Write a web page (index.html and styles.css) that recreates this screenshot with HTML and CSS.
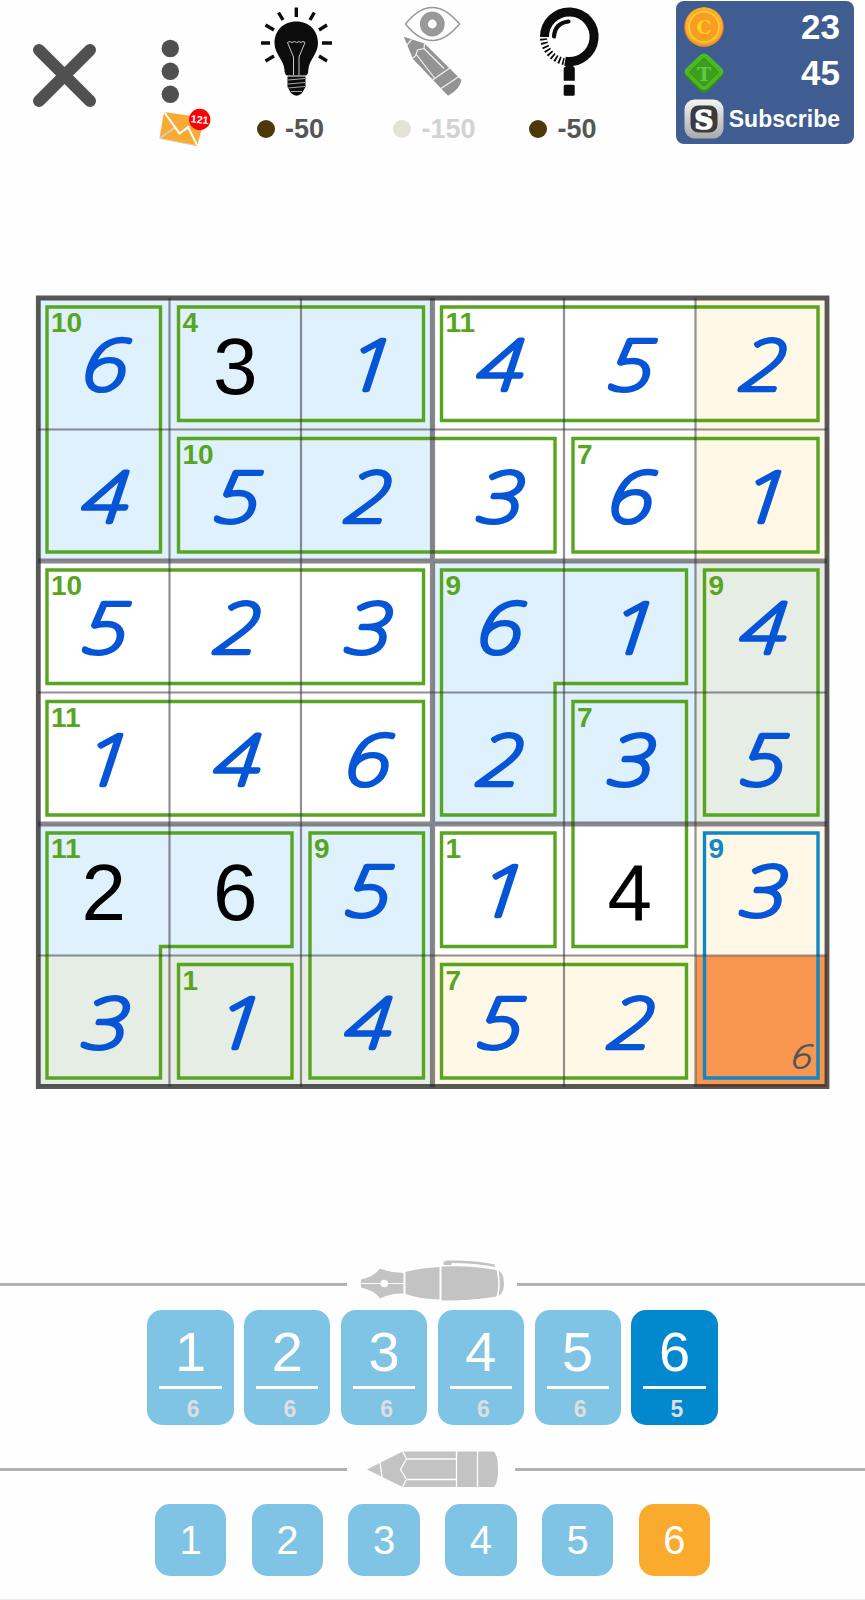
FILE: index.html
```html
<!DOCTYPE html>
<html lang="en">
<head>
  <meta charset="utf-8">
  <title>Killer Sudoku 6x6</title>
  <link rel="stylesheet" href="styles.css">
</head>

<body>

  <div id="toolbar">
    <svg class="tool" viewBox="0 0 130 150" width="130" height="150">
      <path d="M39 50L90 101M90 50L39 101" stroke="#505050" stroke-width="12" stroke-linecap="round"/>
    </svg>

    <svg class="tool" viewBox="130 0 80 150" width="80" height="150" overflow="visible">
      <g fill="#505050">
        <circle cx="170.3" cy="48.5" r="8.7"/>
        <circle cx="170.3" cy="71.3" r="8.7"/>
        <circle cx="170.3" cy="94.3" r="8.7"/>
      </g>
      <path d="M164 112L205 118L197 146L159.500 138.500Z" fill="#f8ab33"/>
      <path d="M160 138L176 127M182 132L190 127" stroke="#d9cfc0" stroke-width="1.600"/>
      <path d="M160 138.500L196 145.500" stroke="#d9cfc0" stroke-width="1"/>
      <path d="M164.500 112.500L179.500 133.500L188 127L197 145" fill="none" stroke="#fff" stroke-width="2"/>
      <circle cx="199.7" cy="119.500" r="10.700" fill="#fb0007"/>
      <text class="badge-num" x="199.700" y="123.300" transform="rotate(6 199.700 119.500)">121</text>
    </svg>

    <div class="tool hint">
      <svg viewBox="210 0 173 110" width="173" height="110">
        <path d="M296.300 7.500V17M278.500 12.500L283 20M314.300 12.500L310 20M265.500 25L274 30M327 25L319 30M261 43H270M322 43H332M265.500 61L274 56M327 61L319 56" stroke="#0c0c0c" stroke-width="3.400"/>
        <path d="M296.300 21.500C283 21.500 274.500 31 274.500 43C274.500 54 284 60 284.500 70C284.500 73.500 285.500 75.500 288 75.500H305C307.500 75.500 308.300 73.500 308.300 70C308.800 60 318 54 318 43C318 31 309.500 21.500 296.300 21.500Z" fill="#0c0c0c"/>
        <path d="M287.500 42.500Q290 40.500 292 42.500Q294.500 40.500 296.500 42.500Q299 40.500 301 42.500Q303 40.500 305 42.500L299 57V75M287.500 42.500L293.500 57V75" fill="none" stroke="#c8c8c8" stroke-width="1"/>
        <path d="M287.500 76.500H305.500V87L302 93Q296.500 98.500 291 93L287.500 87Z" fill="#0c0c0c"/>
        <path d="M288 80L305 78.500M288 84L305 82.500M288 88L305 86.500M291 91.500H302" stroke="#a8a8a8" stroke-width="1"/>
      </svg>
      <div class="price"><i></i>-50</div>
    </div>

    <div class="tool reveal">
      <svg viewBox="383 0 100 110" width="100" height="110">
        <path d="M405.500 24Q432 -9 459.500 24Q432 57 405.500 24Z" fill="none" stroke="#999" stroke-width="1.500"/>
        <circle cx="432.300" cy="24" r="8.400" fill="none" stroke="#999" stroke-width="8"/>
        <path d="M403.800 36.800L424.500 43.500L461.300 80Q460.500 89 448 95.800L413 59Z" fill="#939393"/>
        <path d="M411.500 39.500L406.500 45.500M424.500 43.500L424 48.500L417.500 50L415.500 56L412 58.500M424 48.500L444 68.500M416 54L434.500 78M450.500 67.500L432.500 80M459 76.500L441 88.500" fill="none" stroke="#f2f2f2" stroke-width="1.200"/>
      </svg>
      <div class="price"><i></i>-150</div>
    </div>

    <div class="tool hint">
      <svg viewBox="483 0 172 110" width="172" height="110">
        <path d="M544.500 37A24.800 24.800 0 1 1 565 61.200" fill="none" stroke="#0c0c0c" stroke-width="9"/>
        <path d="M543.500 38.500A26 26 0 0 0 564 61.500" fill="none" stroke="#0c0c0c" stroke-width="7" stroke-dasharray="1.800 2.100"/>
        <path d="M554 36.500Q555 23 568.500 21.500" fill="none" stroke="#0c0c0c" stroke-width="4.200" stroke-linecap="round"/>
        <path d="M566 62H573V66L574.800 68V80.800H563.700V68L566 66Z" fill="#0c0c0c"/>
        <rect x="563.700" y="84.800" width="11" height="11" rx="1.500" fill="#0c0c0c"/>
      </svg>
      <div class="price"><i></i>-50</div>
    </div>

    <div id="wallet">
      <div class="wallet-row">
        <svg viewBox="0 0 40 40" width="40" height="40">
          <circle cx="20" cy="20" r="19.700" fill="#f98e1e"/>
          <circle cx="20" cy="19" r="18.500" fill="#fdb02b"/>
          <circle cx="20" cy="20" r="15" fill="#fa9b23" stroke="#fdd235" stroke-width="1.400"/>
          <text class="coin-letter" x="20" y="26.500" fill="#fdd51f">C</text>
        </svg>
        <b>23</b>
      </div>
      <div class="wallet-row">
        <svg viewBox="0 0 40 40" width="40" height="40">
          <path d="M16 2.500Q20 -1 24 2.500L38 16.500Q41 21 37 25L24 38Q20 41 16 38L3 25Q-1 21 2 16.500Z" fill="#2f8f1c"/>
          <path d="M16 2Q20 -1 24 2L38 15.500Q41 19 37 22.500L24 35.500Q20 38 16 35.500L3 22.500Q-1 19 2 15.500Z" fill="#4fb81f"/>
          <path d="M20 5L34.500 19L20 33.500L5.500 19Z" fill="#3da01a" stroke="#35901b" stroke-width="1"/>
          <text class="coin-letter" x="20" y="27.500" fill="#5fca4a">T</text>
        </svg>
        <b>45</b>
      </div>
      <div class="wallet-row">
        <svg viewBox="0 0 40 40" width="40" height="40">
          <defs>
            <linearGradient id="silver" x1="0" y1="0" x2="0" y2="1">
              <stop offset="0" stop-color="#f4f4f4"/>
              <stop offset="1" stop-color="#a9a9ab"/>
            </linearGradient>
          </defs>
          <rect x="0.500" y="0.500" width="39" height="39" rx="10" fill="url(#silver)"/>
          <rect x="6.500" y="6.500" width="27" height="27" rx="8" fill="#3c3c3e"/>
          <text class="s-letter" x="20" y="29.500">S</text>
        </svg>
        <span>Subscribe</span>
      </div>
    </div>
  </div>

  <div id="board">
    <div class="cell blue"><em>10</em><svg class="pen"><text x="68" y="92">6</text></svg></div>
    <div class="cell blue"><em>4</em><span class="given">3</span></div>
    <div class="cell blue"><svg class="pen"><text x="70" y="92">1</text></svg></div>
    <div class="cell"><em>11</em><svg class="pen"><text x="68" y="92">4</text></svg></div>
    <div class="cell"><svg class="pen"><text x="68" y="92">5</text></svg></div>
    <div class="cell cream"><svg class="pen"><text x="68" y="92">2</text></svg></div>

    <div class="cell blue"><svg class="pen"><text x="68" y="92">4</text></svg></div>
    <div class="cell blue"><em>10</em><svg class="pen"><text x="68" y="92">5</text></svg></div>
    <div class="cell blue"><svg class="pen"><text x="68" y="92">2</text></svg></div>
    <div class="cell"><svg class="pen"><text x="68" y="92">3</text></svg></div>
    <div class="cell"><em>7</em><svg class="pen"><text x="68" y="92">6</text></svg></div>
    <div class="cell cream"><svg class="pen"><text x="70" y="92">1</text></svg></div>

    <div class="cell"><em>10</em><svg class="pen"><text x="68" y="92">5</text></svg></div>
    <div class="cell"><svg class="pen"><text x="68" y="92">2</text></svg></div>
    <div class="cell"><svg class="pen"><text x="68" y="92">3</text></svg></div>
    <div class="cell blue"><em>9</em><svg class="pen"><text x="68" y="92">6</text></svg></div>
    <div class="cell blue"><svg class="pen"><text x="70" y="92">1</text></svg></div>
    <div class="cell sage"><em>9</em><svg class="pen"><text x="68" y="92">4</text></svg></div>

    <div class="cell"><em>11</em><svg class="pen"><text x="70" y="92">1</text></svg></div>
    <div class="cell"><svg class="pen"><text x="68" y="92">4</text></svg></div>
    <div class="cell"><svg class="pen"><text x="68" y="92">6</text></svg></div>
    <div class="cell blue"><svg class="pen"><text x="68" y="92">2</text></svg></div>
    <div class="cell blue"><em>7</em><svg class="pen"><text x="68" y="92">3</text></svg></div>
    <div class="cell sage"><svg class="pen"><text x="68" y="92">5</text></svg></div>

    <div class="cell blue"><em>11</em><span class="given">2</span></div>
    <div class="cell blue"><span class="given">6</span></div>
    <div class="cell blue"><em>9</em><svg class="pen"><text x="68" y="92">5</text></svg></div>
    <div class="cell"><em>1</em><svg class="pen"><text x="70" y="92">1</text></svg></div>
    <div class="cell"><span class="given">4</span></div>
    <div class="cell cream active-cage"><em>9</em><svg class="pen"><text x="68" y="92">3</text></svg></div>

    <div class="cell sage"><svg class="pen"><text x="68" y="92">3</text></svg></div>
    <div class="cell sage"><em>1</em><svg class="pen"><text x="70" y="92">1</text></svg></div>
    <div class="cell sage"><svg class="pen"><text x="68" y="92">4</text></svg></div>
    <div class="cell cream"><em>7</em><svg class="pen"><text x="68" y="92">5</text></svg></div>
    <div class="cell cream"><svg class="pen"><text x="68" y="92">2</text></svg></div>
    <div class="cell selected"><svg class="pen note"><text x="106" y="112">6</text></svg></div>

    <!-- cages and grid lines, 131.5 per cell -->
    <svg id="lines" viewBox="0 0 789 789" width="789" height="789">
      <g class="cages">
        <path d="M9 9H122.500V254H9Z"/>
        <path d="M140.500 9H385.500V122.500H140.500Z"/>
        <path d="M403.500 9H780V122.500H403.500Z"/>
        <path d="M140.500 140.500H517V254H140.500Z"/>
        <path d="M535 140.500H780V254H535Z"/>
        <path d="M9 272H385.500V385.500H9Z"/>
        <path d="M403.500 272H648.500V385.500H517V517H403.500Z"/>
        <path d="M666.500 272H780V517H666.500Z"/>
        <path d="M9 403.500H385.500V517H9Z"/>
        <path d="M535 403.500H648.500V648.500H535Z"/>
        <path d="M9 535H254V648.500H122.500V780H9Z"/>
        <path d="M272 535H385.500V780H272Z"/>
        <path d="M403.500 535H517V648.500H403.500Z"/>
        <path d="M140.500 666.500H254V780H140.500Z"/>
        <path d="M403.500 666.500H648.500V780H403.500Z"/>
        <path class="current" d="M666.500 535H780V780H666.500Z"/>
      </g>
      <path class="thin" d="M131.500 0V789M263 0V789M526 0V789M657.500 0V789"/>
      <path class="thin" d="M0 131.500H789M0 394.500H789M0 657.500H789"/>
      <path class="thick" d="M394.500 0V789M0 263H789M0 526H789"/>
      <path class="frame" d="M0.300 0H789V788.500H0.300Z"/>
    </svg>
  </div>

  <div class="divider pen-divider">
    <svg viewBox="347 1260 170 49" width="170" height="49">
      <g fill="#c3c3c3">
        <path d="M361 1279.500Q374 1277 380 1268.500Q391 1273 403.500 1273V1293.500Q391 1293 380 1298.500Q374 1290 361 1287.500Z"/>
        <path d="M405.500 1272Q420 1268 439.500 1267V1299.500Q420 1299 405.500 1294Z"/>
        <path d="M441.500 1266.500Q470 1265 496.500 1270Q500 1284 496.500 1296.500Q470 1301 441.500 1300.500Z"/>
        <path d="M498.500 1270.500Q504 1274 504 1283.500Q504 1293 498.500 1296Q501 1284 498.500 1270.500Z"/>
        <path d="M443.500 1263Q443 1260.500 448 1260.500Q475 1260 495 1264.500V1267Q475 1263 452 1263L451 1265H443.500Z"/>
      </g>
      <path d="M361 1283.500H404" stroke="#fff" stroke-width="1"/>
      <circle cx="384.300" cy="1283.500" r="3.800" fill="#fff"/>
    </svg>
  </div>
  <div class="pad pen-pad">
    <div class="key">1<small>6</small></div>
    <div class="key">2<small>6</small></div>
    <div class="key">3<small>6</small></div>
    <div class="key">4<small>6</small></div>
    <div class="key">5<small>6</small></div>
    <div class="key on">6<small>5</small></div>
  </div>

  <div class="divider pencil-divider">
    <svg viewBox="347 1435 168 69" width="168" height="69">
      <path d="M367 1469.500L402.500 1451.500H494Q498 1456 498 1469.500Q498 1483 494 1487H402.500Z" fill="#c3c3c3"/>
      <path d="M380 1462L382 1477M402.500 1451L406.500 1459L400.500 1469.500L406.500 1479.500L402.500 1487M406.500 1459H456.500M406.500 1479.500H456.500M456.500 1451V1488M477.500 1451V1488" fill="none" stroke="#fff" stroke-width="1.300"/>
    </svg>
  </div>
  <div class="pad pencil-pad">
    <div class="key">1</div>
    <div class="key">2</div>
    <div class="key">3</div>
    <div class="key">4</div>
    <div class="key">5</div>
    <div class="key on">6</div>
  </div>

</body>
</html>
```

FILE: styles.css
```css
* {
  box-sizing: border-box;
}
body {
  margin: 0;
  height: 1600px;
  background: #fefefe;
  border-bottom: 1px solid #ececec;
  font-family: "Liberation Sans", Arial, sans-serif;
  overflow: hidden;
}
svg {
  display: block;
}

/* Toolbar */
#toolbar {
  display: flex;
  height: 150px;
}
.tool {
  flex: none;
}
.price {
  display: flex;
  align-items: center;
  justify-content: center;
  gap: 10px;
  height: 38px;
  color: #555;
  font-size: 27px;
  font-weight: bold;
}
.hint .price {
  padding-right: 12px;
}
.price i {
  width: 18px;
  height: 18px;
  border-radius: 50%;
  background: #4d3908;
}
.reveal .price {
  padding-left: 3px;
  color: #d3d3d3;
}
.reveal .price i {
  background: #e4e1d9;
}
.badge-num {
  fill: #fff;
  font-size: 10.5px;
  font-weight: bold;
  text-anchor: middle;
}

#wallet {
  width: 178px;
  height: 143px;
  margin: 1px 0 0 21px;
  padding: 3px 14px 0 8px;
  border-radius: 8px;
  background: #405d91;
  color: #fff;
}
.wallet-row {
  display: flex;
  align-items: center;
  justify-content: space-between;
  height: 46px;
}
.wallet-row b {
  font-size: 35px;
}
.wallet-row span {
  font-size: 23px;
  font-weight: bold;
}
.coin-letter, .s-letter {
  font-family: "DejaVu Serif", serif;
  font-weight: bold;
  font-size: 19px;
  text-anchor: middle;
}
.s-letter {
  font-size: 26px;
  fill: #fff;
  stroke: #fff;
  stroke-width: 1.5;
}

/* Board */
#board {
  position: relative;
  display: grid;
  grid-template-columns: repeat(6, 131.5px);
  grid-auto-rows: 131.5px;
  width: 789px;
  margin: 148px 0 0 38px;
  background: #fff;
}
.cell {
  display: grid;
}
.cell > * {
  grid-area: 1 / 1;
}
.blue { background: #dff1fd; }
.cream { background: #fff8e6; }
.sage { background: #e6ede4; }
.selected { background: #f9964f; }
.cell em {
  padding: 9px 0 0 13px;
  color: #58a522;
  font-size: 28px;
  font-style: normal;
  font-weight: bold;
  line-height: 32px;
}
.active-cage em {
  color: #1088c8;
}
.given {
  padding-top: 22px;
  color: #000;
  font-size: 80px;
  line-height: 93px;
  text-align: center;
}
.pen {
  width: 131px;
  height: 131px;
}
.pen text {
  fill: #0555d6;
  stroke: #0555d6;
  stroke-width: 4.6px;
  stroke-linejoin: round;
  text-anchor: middle;
  font-family: "Noto Sans", sans-serif;
  font-size: 70px;
  font-style: italic;
  font-weight: 100;
  transform: scaleX(1.17) skewX(-4deg);
  transform-box: fill-box;
  transform-origin: center;
}
.pen.note text {
  fill: #555;
  stroke: #555;
  stroke-width: 1.4px;
  font-size: 32px;
}
#lines {
  position: absolute;
  top: 0;
  left: 0;
  overflow: visible;
}
#lines path {
  fill: none;
}
.cages path {
  stroke: #58a522;
  stroke-width: 3.4;
}
.cages .current {
  stroke: #1088c8;
}
.thin {
  stroke: rgba(55, 50, 55, .54);
  stroke-width: 2.2;
}
.thick {
  stroke: rgba(55, 50, 55, .58);
  stroke-width: 5.2;
}
.frame {
  stroke: rgba(35, 35, 35, .76);
  stroke-width: 4.8;
}

/* Number pads */
.divider {
  display: flex;
  align-items: center;
}
.divider::before, .divider::after {
  content: "";
  height: 3px;
  background: #b2b2b2;
}
.divider::before {
  width: 347px;
}
.divider::after {
  flex: 1;
}
.pen-divider {
  margin-top: 173px;
}
.pencil-divider {
  margin-top: 10px;
}
.pad {
  display: flex;
  justify-content: center;
}
.key {
  background: #7fc3e5;
  color: #fff;
  text-align: center;
}
.pen-pad {
  gap: 10.6px;
  margin-top: 1px;
}
.pen-pad .key {
  width: 86.2px;
  height: 115px;
  padding: 10px 12px 0;
  border-radius: 15px;
  font-size: 56px;
  line-height: 64px;
}
.pen-pad .key.on {
  background: #0188cd;
}
.pen-pad small {
  display: block;
  margin-top: 2px;
  padding: 6px 0 0 5px;
  border-top: 3px solid #fff;
  color: #dedede;
  font-size: 23px;
  font-weight: bold;
  line-height: 28px;
}
.pencil-pad {
  gap: 25.3px;
}
.pencil-pad .key {
  width: 71.5px;
  height: 72px;
  border-radius: 15px;
  font-size: 40px;
  line-height: 72px;
}
.pencil-pad .key.on {
  background: #faab2d;
}
```
